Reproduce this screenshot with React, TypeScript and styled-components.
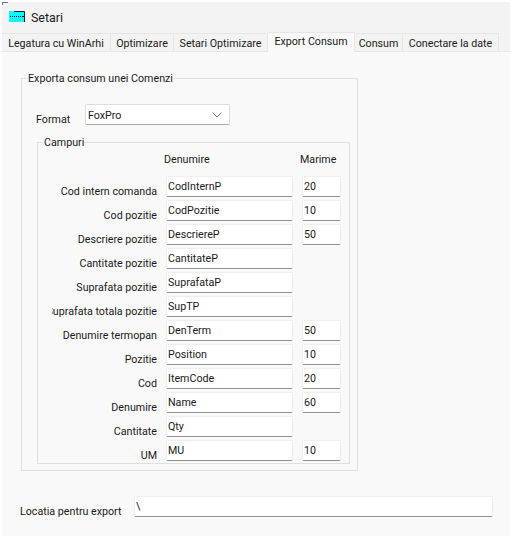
import React from "react";
import styled, { createGlobalStyle } from "styled-components";

const Global = createGlobalStyle`
  html, body { margin: 0; padding: 0; background: #fff; }
  body { font-family: Roboto, "Open Sans", "Liberation Sans", sans-serif; font-size: 10.7px; color: #1a1a1a; }
  * { box-sizing: border-box; }
`;

const Frame = styled.div`
  width: 512px;
  height: 538px;
  padding: 2px 2px 2px 2px;
  background: #fff;
`;
const Window = styled.div`
  width: 508px;
  height: 534px;
  background: linear-gradient(#777, #777) no-repeat 0 0 / 6px 1px, linear-gradient(#777, #777) no-repeat 0 0 / 1px 3px, #f3f3f3;
  display: flex;
  flex-direction: column;
`;
const TitleBar = styled.div`
  height: 32px;
  display: flex;
  align-items: center;
  gap: 6px;
  padding: 0 0 2px 7px;
  font-size: 12.4px;
`;
const IconSlot = styled.span`
  display: flex;
  margin-bottom: 2px;
`;
const TabRow = styled.div`
  height: 18px;
  display: flex;
  align-items: flex-end;
  border-bottom: 1px solid #e6e6e6;
`;
const Tab = styled.div<{ $w: number; $active?: boolean }>`
  width: ${(p) => p.$w}px;
  height: ${(p) => (p.$active ? 20 : 18)}px;
  margin-top: ${(p) => (p.$active ? -2 : 0)}px;
  margin-bottom: ${(p) => (p.$active ? -1 : 0)}px;
  padding-top: ${(p) => (p.$active ? 2 : 3)}px;
  background: ${(p) => (p.$active ? "#f9f9f9" : "#f3f3f3")};
  border: 1px solid #e6e6e6;
  border-width: 1px 1px 0 0;
  display: flex;
  justify-content: center;
  align-items: ${(p) => (p.$active ? "flex-start" : "center")};
  white-space: nowrap;
  line-height: 14px;
`;
const Content = styled.div`
  flex: 1;
  background: #f9f9f9;
  padding: 18px 0 0 19px;
`;
const Group = styled.fieldset<{ $w: number; $h: number; $ml?: number }>`
  width: ${(p) => p.$w}px;
  height: ${(p) => p.$h}px;
  margin: 0 0 0 ${(p) => p.$ml ?? 0}px;
  padding: 0;
  border: 1px solid #dfdfdf;
`;
const Caption = styled.legend`
  margin-left: 6px;
  padding: 2px 0 0;
  line-height: 14px;
  white-space: nowrap;
`;
const FormatRow = styled.div`
  display: flex;
  align-items: flex-start;
  margin: 18px 0 9px 14px;
  height: 21px;
`;
const FormatLabel = styled.span`
  width: 49px;
  margin-top: 8px;
  line-height: 15px;
`;
const Select = styled.div`
  width: 145px;
  height: 21px;
  background: #fff;
  border: 1px solid #dcdcdc;
  border-bottom-color: #a8a8a8;
  border-radius: 2px;
  display: flex;
  align-items: center;
  justify-content: space-between;
  padding: 1px 7px 0 2px;
`;
const HeaderRow = styled.div`
  display: grid;
  grid-template-columns: 126px 136px 40px;
  height: 19px;
  align-items: center;
`;
const HeadCell = styled.span<{ $col: number }>`
  grid-column: ${(p) => p.$col};
  line-height: 14px;
`;
const Rows = styled.div`
  display: grid;
  grid-template-columns: 105px 127px 39px;
  column-gap: 9px;
  row-gap: 3px;
  margin: 7px 0 0 14px;
`;
const FieldLabel = styled.span`
  height: 21px;
  overflow: hidden;
  white-space: nowrap;
  display: flex;
  justify-content: flex-end;
  align-items: flex-end;
  line-height: 10px;
`;
const Input = styled.div<{ $w?: number }>`
  height: 21px;
  width: ${(p) => (p.$w ? `${p.$w}px` : "auto")};
  background: #fff;
  border: 1px solid #eeeeee;
  border-bottom: 1px solid #8e8e8e;
  border-radius: 2px;
  padding: 0 0 0 1px;
  display: flex;
  align-items: center;
  line-height: 14px;
  white-space: nowrap;
`;
const Empty = styled.span``;
const PathRow = styled.div`
  display: flex;
  align-items: flex-start;
  margin-top: 25px;
  margin-left: -1px;
`;
const PathLabel = styled.span`
  width: 114px;
  margin-top: 8px;
  line-height: 15px;
  white-space: nowrap;
`;

const AppIcon = () => (
  <svg width="16" height="11" viewBox="0 0 16 11" aria-hidden="true">
    <rect width="16" height="11" fill="#00ffff" />
    <path d="M1 5.5h1M3 5.5h1M5 5.5h1M7 5.5h1M9 5.5h1M11 5.5h1M13 5.5h2" stroke="#000" strokeWidth="1" />
    <path d="M5 .5h10.5V11" fill="none" stroke="#222" strokeWidth="1" />
  </svg>
);
const Chevron = () => (
  <svg width="10" height="6" viewBox="0 0 10 6" aria-hidden="true">
    <path d="M.5.5 5 5 9.5.5" fill="none" stroke="#666" strokeWidth="0.9" />
  </svg>
);

const tabs: [string, number, boolean?][] = [
  ["Legatura cu WinArhi", 109],
  ["Optimizare", 63],
  ["Setari Optimizare", 94],
  ["Export Consum", 87, true],
  ["Consum", 48],
  ["Conectare la date", 96],
];
const rows: [string, string, string?][] = [
  ["Cod intern comanda", "CodInternP", "20"],
  ["Cod pozitie", "CodPozitie", "10"],
  ["Descriere pozitie", "DescriereP", "50"],
  ["Cantitate pozitie", "CantitateP"],
  ["Suprafata pozitie", "SuprafataP"],
  ["Suprafata totala pozitie", "SupTP"],
  ["Denumire termopan", "DenTerm", "50"],
  ["Pozitie", "Position", "10"],
  ["Cod", "ItemCode", "20"],
  ["Denumire", "Name", "60"],
  ["Cantitate", "Qty"],
  ["UM", "MU", "10"],
];

export default function App() {
  return (
    <Frame>
      <Global />
      <Window>
        <TitleBar>
          <IconSlot><AppIcon /></IconSlot>
          <span>Setari</span>
        </TitleBar>
        <TabRow>
          {tabs.map(([t, w, a]) => (
            <Tab key={t} $w={w} $active={a}>{t}</Tab>
          ))}
        </TabRow>
        <Content>
          <Group $w={337} $h={401}>
            <Caption>Exporta consum unei Comenzi</Caption>
            <FormatRow>
              <FormatLabel>Format</FormatLabel>
              <Select>
                <span>FoxPro</span>
                <Chevron />
              </Select>
            </FormatRow>
            <Group $w={313} $h={330} $ml={15}>
              <Caption>Campuri</Caption>
              <HeaderRow>
                <HeadCell $col={2}>Denumire</HeadCell>
                <HeadCell $col={3}>Marime</HeadCell>
              </HeaderRow>
              <Rows>
                {rows.map(([l, v, s]) => (
                  <React.Fragment key={l}>
                    <FieldLabel>{l}</FieldLabel>
                    <Input>{v}</Input>
                    {s ? <Input>{s}</Input> : <Empty />}
                  </React.Fragment>
                ))}
              </Rows>
            </Group>
          </Group>
          <PathRow>
            <PathLabel>Locatia pentru export</PathLabel>
            <Input $w={359}>\</Input>
          </PathRow>
        </Content>
      </Window>
    </Frame>
  );
}
